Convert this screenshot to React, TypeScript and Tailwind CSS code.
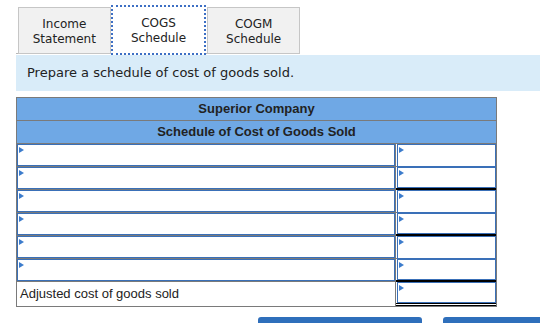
import React from "react"

const rows = [
  { underline: false },
  { underline: true },
  { underline: false },
  { underline: true },
  { underline: false },
  { underline: true },
]

function Marker() {
  return (
    <span className="absolute left-[1px] top-[2px] h-0 w-0 border-y-[3px] border-y-transparent border-l-[5px] border-l-[#3c7ccc]" />
  )
}

function InputBox() {
  return (
    <div className="relative h-full w-full border border-[#3a70b8] bg-white">
      <Marker />
    </div>
  )
}

export default function App() {
  return (
    <div className="relative h-[323px] w-[540px] overflow-hidden bg-white" style={{ fontFamily: "'DejaVu Sans', Verdana, sans-serif" }}>
      {/* Tabs */}
      <div className="ml-[16px] mt-[5px] flex h-[49px] w-[284px] items-end border-b border-[#b8b8b8] pl-[2px]">
        <div className="mb-[-1px] flex h-[47px] w-[93px] flex-col items-center justify-center border border-[#c6c6c6] bg-[#f1f1f1] pt-[2px] text-[12px] leading-[15px] text-[#222]">
          <span>Income</span>
          <span>Statement</span>
        </div>
        <div className="mb-[-2px] flex h-[50px] w-[96px] flex-col items-center justify-center border-2 border-dotted border-[#3d6fc4] bg-white pt-[2px] text-[12px] leading-[15px] text-[#222]">
          <span>COGS</span>
          <span>Schedule</span>
        </div>
        <div className="mb-[-1px] ml-[1px] flex h-[47px] w-[93px] flex-col items-center justify-center border border-[#c6c6c6] bg-[#f1f1f1] pt-[2px] text-[12px] leading-[15px] text-[#222]">
          <span>COGM</span>
          <span>Schedule</span>
        </div>
      </div>

      {/* Instruction */}
      <div className="ml-[16px] mt-[1px] flex h-[36px] items-center bg-[#d9ecf9] pl-[11px] text-[13px] text-[#222]">
        Prepare a schedule of cost of goods sold.
      </div>

      {/* Table */}
      <div
        className="ml-[16px] mt-[6px] w-[481px] border border-[#7a7a7a] text-[13px] text-[#222]"
        style={{ fontFamily: "'Liberation Sans', Arial, sans-serif" }}
      >
        <div className="flex h-[23px] items-center justify-center border-b border-[#7a7a7a] bg-[#6fa8e5] font-bold">
          Superior Company
        </div>
        <div className="flex h-[23px] items-center justify-center border-b border-[#7a7a7a] bg-[#6fa8e5] font-bold">
          Schedule of Cost of Goods Sold
        </div>
        {rows.map((r, i) => (
          <div key={i} className="flex h-[23px] border-b border-[#7a7a7a]">
            <div className="h-full w-[379px] border-r border-[#7a7a7a]">
              <InputBox />
            </div>
            <div className={`h-[23px] flex-1 pl-[1px] ${r.underline ? "border-b-2 border-black" : ""}`}>
              <InputBox />
            </div>
          </div>
        ))}
        <div className="flex h-[24px]">
          <div className="flex h-full w-[379px] items-center border-r border-[#7a7a7a] pl-[3px]">
            Adjusted cost of goods sold
          </div>
          <div className="h-full flex-1 border-b-[3px] border-double border-black pl-[1px]">
            <InputBox />
          </div>
        </div>
      </div>

      {/* Bottom buttons */}
      <div className="ml-[258px] mt-[10px] flex gap-[21px]">
        <div className="h-[10px] w-[164px] shrink-0 rounded-t-[3px] bg-[#2f6fbb]" />
        <div className="h-[10px] w-[100px] shrink-0 rounded-t-[3px] bg-[#2f6fbb]" />
      </div>
    </div>
  )
}
